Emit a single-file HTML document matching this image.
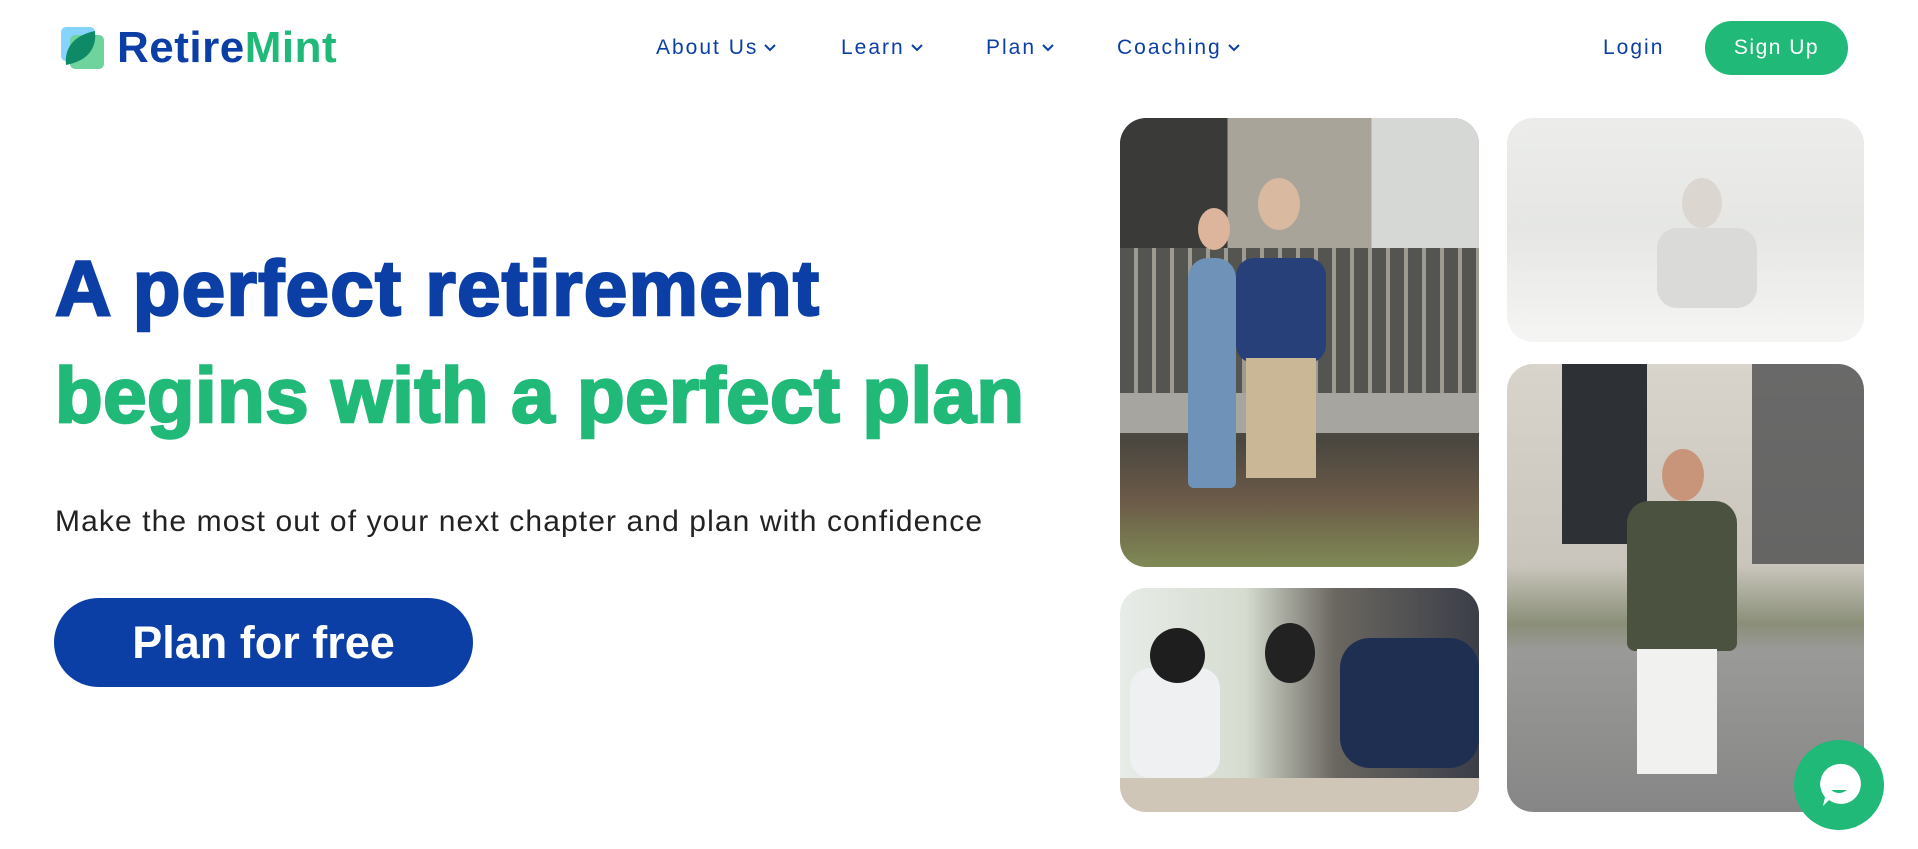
<!DOCTYPE html>
<html><head><meta charset="utf-8"><style>
*{margin:0;padding:0;box-sizing:border-box}
body{width:1918px;height:849px;background:#fff;position:relative;overflow:hidden;font-family:"Liberation Sans",sans-serif}
.a{position:absolute}
.nav{font-size:21px;color:#0c3fa6;letter-spacing:2px;top:36px}
.nav svg{margin-left:6px;vertical-align:middle}
.h{font-weight:bold;font-size:78px;left:55px;white-space:nowrap;line-height:1;-webkit-text-stroke:2.5px currentColor}
.ph{border-radius:26px;overflow:hidden}
</style></head><body>
<svg class="a" style="left:61px;top:27px" width="43" height="42" viewBox="0 0 43 42">
<rect x="0" y="0" width="34" height="34" rx="5" fill="#86d3fb"/>
<rect x="9" y="8" width="34" height="34" rx="5" fill="#6fd39e"/>
<path d="M5 38 C3 20 14 8 34 4 C36 22 26 34 5 38Z" fill="#0e8a66"/>
</svg>
<div class="a" style="left:117px;top:24px;font-size:44px;font-weight:bold;letter-spacing:0.5px;line-height:48px"><span style="color:#0c3fa6">Retire</span><span style="color:#20b978">Mint</span></div>
<div class="a nav" style="left:656px">About Us<svg width="12" height="8"><path d="M1 1l5 5 5-5" stroke="#0c3fa6" stroke-width="2" fill="none"/></svg></div>
<div class="a nav" style="left:841px">Learn<svg width="12" height="8"><path d="M1 1l5 5 5-5" stroke="#0c3fa6" stroke-width="2" fill="none"/></svg></div>
<div class="a nav" style="left:986px">Plan<svg width="12" height="8"><path d="M1 1l5 5 5-5" stroke="#0c3fa6" stroke-width="2" fill="none"/></svg></div>
<div class="a nav" style="left:1117px">Coaching<svg width="12" height="8"><path d="M1 1l5 5 5-5" stroke="#0c3fa6" stroke-width="2" fill="none"/></svg></div>
<div class="a nav" style="left:1603px">Login</div>
<div class="a" style="left:1705px;top:21px;width:143px;height:54px;border-radius:27px;background:#20b978;color:#fff;font-size:21px;letter-spacing:1.5px;text-align:center;line-height:54px">Sign Up</div>

<div class="a h" style="top:249px;color:#0c3fa6;letter-spacing:1.35px">A perfect retirement</div>
<div class="a h" style="top:356px;color:#20b978;letter-spacing:0.45px">begins with a perfect plan</div>
<div class="a" style="left:55px;top:505px;font-size:30px;letter-spacing:1.1px;color:#222;white-space:nowrap">Make the most out of your next chapter and plan with confidence</div>
<div class="a" style="left:54px;top:598px;width:419px;height:89px;border-radius:45px;background:#0c3fa6;color:#fff;font-weight:bold;font-size:45px;text-align:center;line-height:89px">Plan for free</div>

<div class="a ph" style="left:1120px;top:118px;width:359px;height:449px;background:linear-gradient(180deg,#8a8478 0%,#6f6a60 30%,#5a5a55 55%,#4a4740 72%,#6b5a48 85%,#7f8a55 100%)">
 <div class="a" style="left:0;top:0;width:359px;height:130px;background:linear-gradient(90deg,#3a3a38 0 30%,#a9a49a 30% 70%,#d6d8d6 70%)"></div>
 <div class="a" style="left:0;top:130px;width:359px;height:145px;background:repeating-linear-gradient(90deg,#545450 0 14px,#9d9a92 14px 18px)"></div>
 <div class="a" style="left:0;top:275px;width:359px;height:40px;background:#a7a59f"></div>
 <div class="a" style="left:68px;top:140px;width:48px;height:230px;background:#6f93b8;border-radius:20px 20px 6px 6px"></div>
 <div class="a" style="left:116px;top:140px;width:90px;height:105px;background:#28407a;border-radius:18px"></div>
 <div class="a" style="left:126px;top:240px;width:70px;height:120px;background:#c9b796"></div>
 <div class="a" style="left:138px;top:60px;width:42px;height:52px;background:#d9b9a0;border-radius:50%"></div>
 <div class="a" style="left:78px;top:90px;width:32px;height:42px;background:#dcb59c;border-radius:50%"></div>
</div>
<div class="a ph" style="left:1120px;top:588px;width:359px;height:224px;background:linear-gradient(90deg,#e8ece8 0%,#d5dccf 35%,#6a6660 60%,#3b3e48 100%)">
 <div class="a" style="left:10px;top:80px;width:90px;height:110px;background:#eef0f2;border-radius:20px"></div>
 <div class="a" style="left:30px;top:40px;width:55px;height:55px;background:#1e1e1e;border-radius:50%"></div>
 <div class="a" style="left:145px;top:35px;width:50px;height:60px;background:#222;border-radius:50%"></div>
 <div class="a" style="left:220px;top:50px;width:139px;height:130px;background:#1f2f52;border-radius:30px"></div>
 <div class="a" style="left:0;top:190px;width:359px;height:34px;background:#cfc6b8"></div>
</div>
<div class="a ph" style="left:1507px;top:118px;width:357px;height:224px;background:linear-gradient(180deg,#ecedeb 0%,#e6e7e4 50%,#f5f5f4 100%)">
 <div class="a" style="left:150px;top:110px;width:100px;height:80px;background:#dadbd9;border-radius:20px"></div>
 <div class="a" style="left:175px;top:60px;width:40px;height:50px;background:#dcd6d0;border-radius:50%"></div>
</div>
<div class="a ph" style="left:1507px;top:364px;width:357px;height:448px;background:linear-gradient(180deg,#d8d4cc 0%,#c9c5bc 45%,#8a8f78 58%,#9a9a98 64%,#868686 100%)">
 <div class="a" style="left:55px;top:0;width:85px;height:180px;background:#2d3136"></div>
 <div class="a" style="left:245px;top:0;width:112px;height:200px;background:#3a3c3e;opacity:.7"></div>
 <div class="a" style="left:120px;top:137px;width:110px;height:150px;background:#4b5240;border-radius:22px 22px 8px 8px"></div>
 <div class="a" style="left:130px;top:285px;width:80px;height:125px;background:#f1f1ef"></div>
 <div class="a" style="left:155px;top:85px;width:42px;height:52px;background:#c8957a;border-radius:50%"></div>
</div>

<div class="a" style="left:1794px;top:740px;width:90px;height:90px;border-radius:50%;background:#20b978"></div>
<svg class="a" style="left:1817px;top:762px" width="44" height="46" viewBox="0 0 44 46">
<path d="M22 2 A20 20 0 1 1 12 38 L6 44 L8 35 A20 20 0 0 1 22 2Z" fill="#fff"/>
<path d="M14 28 Q22 34 30 28Z" fill="#20b978"/>
</svg>
</body></html>
